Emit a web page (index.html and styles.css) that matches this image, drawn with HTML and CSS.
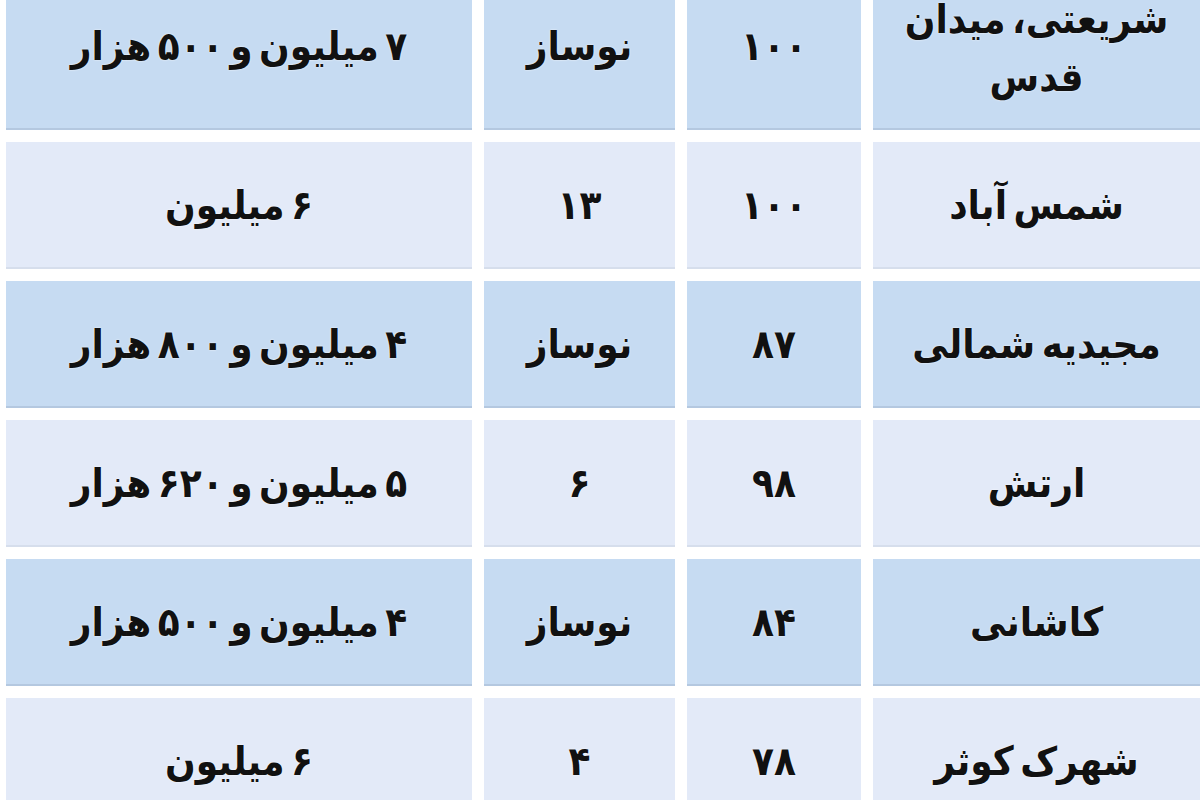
FILE: index.html
```html
<!DOCTYPE html>
<html lang="fa" dir="rtl">
<head>
<meta charset="utf-8">
<title>جدول قیمت</title>
<link rel="stylesheet" href="styles.css">
</head>
<body>
<div class="table">
  <div class="cell blue loc">شریعتی، میدان<br>قدس</div>
  <div class="cell blue">۱۰۰</div>
  <div class="cell blue">نوساز</div>
  <div class="cell blue">۷ میلیون و ۵۰۰ هزار</div>

  <div class="cell light">شمس آباد</div>
  <div class="cell light">۱۰۰</div>
  <div class="cell light">۱۳</div>
  <div class="cell light">۶ میلیون</div>

  <div class="cell blue">مجیدیه شمالی</div>
  <div class="cell blue">۸۷</div>
  <div class="cell blue">نوساز</div>
  <div class="cell blue">۴ میلیون و ۸۰۰ هزار</div>

  <div class="cell light">ارتش</div>
  <div class="cell light">۹۸</div>
  <div class="cell light">۶</div>
  <div class="cell light">۵ میلیون و ۶۲۰ هزار</div>

  <div class="cell blue">کاشانی</div>
  <div class="cell blue">۸۴</div>
  <div class="cell blue">نوساز</div>
  <div class="cell blue">۴ میلیون و ۵۰۰ هزار</div>

  <div class="cell light">شهرک کوثر</div>
  <div class="cell light">۷۸</div>
  <div class="cell light">۴</div>
  <div class="cell light">۶ میلیون</div>
</div>
</body>
</html>
```
FILE: styles.css
```css
html, body {
  margin: 0;
  padding: 0;
  background: #ffffff;
  overflow: hidden;
}
body {
  width: 1200px;
  height: 800px;
}
.table {
  direction: rtl;
  display: grid;
  grid-template-columns: 327px 174px 191px 466px;
  grid-template-rows: 166px repeat(5, 127px);
  column-gap: 12px;
  row-gap: 12px;
  width: 1194px;
  margin: -36px 0 0 7px;
  font-family: "DejaVu Sans Condensed", "DejaVu Sans", sans-serif;
  font-weight: bold;
  font-size: 40px;
  word-spacing: -6px;
  color: #111111;
}
.cell {
  display: flex;
  align-items: center;
  justify-content: center;
  text-align: center;
  line-height: 1.4;
  box-sizing: border-box;
  text-shadow: 0 0 2px #ffffff;
}
.loc {
  line-height: 1.45;
  padding-top: 4px;
}
.blue {
  background: #c6dbf2;
  border-bottom: 2px solid #b4c8e0;
}
.light {
  background: #e3eaf8;
  border-bottom: 2px solid #d6deec;
}
```
